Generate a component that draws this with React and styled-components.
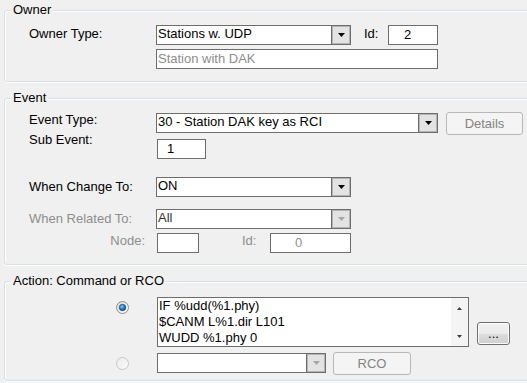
import React from "react";
import styled, { createGlobalStyle } from "styled-components";

const Global = createGlobalStyle`
  html, body { margin: 0; padding: 0; background: #f0f0f0; overflow: hidden; }
  body { font-family: "Liberation Sans", Arial, sans-serif; font-size: 13px; color: #000; }
  #root { width: 527px; height: 383px; overflow: hidden; }
  * { box-sizing: border-box; }
`;

const Page = styled.div`
  display: flex;
  flex-direction: column;
  gap: 16px;
  padding: 10px 0 0 4px;
  width: 600px;
`;

const Group = styled.section`
  position: relative;
  width: 570px;
  border: 1px solid #d5dfe5;
  border-radius: 3px;
  box-shadow: inset 1px 1px 0 #fff, 0 1px 0 #fff;
  padding: ${(p) => p.$pad};
  display: flex;
  flex-direction: column;
`;

const Legend = styled.span`
  position: absolute;
  top: -9px;
  left: 6px;
  padding: 0 2px;
  line-height: 15px;
  background: #f0f0f0;
`;

const Row = styled.div`
  display: flex;
  align-items: flex-start;
  margin-top: ${(p) => p.$mt || 0}px;
`;

const Label = styled.div`
  width: ${(p) => p.$w || 127}px;
  flex: none;
  line-height: 15px;
  white-space: nowrap;
  margin-top: ${(p) => p.$dy || 0}px;
  margin-left: ${(p) => p.$ml || 0}px;
  padding-right: ${(p) => p.$pr || 0}px;
  text-align: ${(p) => p.$align || "left"};
  color: ${(p) => (p.$disabled ? "#8d8d8d" : "#000")};
`;

const TextBox = styled.div`
  flex: none;
  width: ${(p) => p.$w}px;
  height: 20px;
  margin-left: ${(p) => p.$ml || 0}px;
  border: 1px solid #6d6d6d;
  background: #fff;
  line-height: 15px;
  padding: 1px 1px 0 ${(p) => p.$pl || 1}px;
  white-space: nowrap;
  overflow: hidden;
  color: ${(p) => (p.$disabled ? "#8d8d8d" : "#000")};
`;

const ComboBox = styled.div`
  flex: none;
  display: flex;
  width: ${(p) => p.$w}px;
  height: 20px;
  margin-top: ${(p) => p.$mt || 0}px;
  margin-left: ${(p) => p.$ml || 0}px;
  border: 1px solid #6d6d6d;
  background: #fff;
`;

const ComboText = styled.div`
  flex: 1;
  line-height: 15px;
  padding: 0 1px;
  white-space: nowrap;
  overflow: hidden;
  color: ${(p) => (p.$disabled ? "#333" : "#000")};
`;

const ComboButton = styled.div`
  flex: none;
  width: 19px;
  border-left: 1px solid #6d6d6d;
  background: #e3e3e3;
  box-shadow: inset 0 0 0 1px #b4b4b4;
  display: flex;
  align-items: center;
  justify-content: center;
`;

const Button = styled.div`
  flex: none;
  width: ${(p) => p.$w}px;
  height: 23px;
  margin-top: ${(p) => p.$mt || 0}px;
  margin-left: ${(p) => p.$ml || 0}px;
  border: 1px solid ${(p) => (p.$disabled ? "#b5b9bc" : "#707070")};
  border-radius: 3px;
  background: ${(p) =>
    p.$disabled
      ? "#f4f4f4"
      : "linear-gradient(#f2f2f2 0%, #ebebeb 50%, #dddddd 51%, #cfcfcf 100%)"};
  box-shadow: inset 0 0 0 1px ${(p) => (p.$disabled ? "#f4f4f4" : "#fcfcfc")};
  color: ${(p) => (p.$disabled ? "#838383" : "#000")};
  display: flex;
  align-items: center;
  justify-content: center;
  line-height: 15px;
`;

const RadioCell = styled.div`
  flex: none;
  width: 152px;
  padding-left: 111px;
  padding-top: ${(p) => p.$pt}px;
  display: flex;
`;

const Memo = styled.div`
  flex: none;
  display: flex;
  width: 312px;
  height: 50px;
  border: 1px solid #6d6d6d;
  background: #fff;
`;

const MemoText = styled.div`
  flex: 1;
  padding: 0 1px;
  line-height: 16px;
  white-space: pre;
  overflow: hidden;
`;

const ScrollBar = styled.div`
  flex: none;
  width: 17px;
  background: #f4f4f4;
  display: flex;
  flex-direction: column;
  align-items: center;
  justify-content: space-between;
  padding: 9px 0 8px;
`;

const Arrow = ({ color = "#000", up = false, w = 7, h = 4 }) => (
  <svg width={w} height={h} viewBox={`0 0 ${w} ${h}`} style={{ display: "block" }}>
    <polygon
      points={up ? `0,${h} ${w},${h} ${w / 2},0` : `0,0 ${w},0 ${w / 2},${h}`}
      fill={color}
    />
  </svg>
);

const Combo = ({ w, text, disabled, mt, ml }) => (
  <ComboBox $w={w} $mt={mt} $ml={ml}>
    <ComboText $disabled={disabled}>{text}</ComboText>
    <ComboButton>
      <Arrow color={disabled ? "#a6a6a6" : "#000"} />
    </ComboButton>
  </ComboBox>
);

const Radio = ({ checked }) => (
  <svg width="13" height="13" viewBox="0 0 13 13" style={{ display: "block" }}>
    <defs>
      <linearGradient id={checked ? "rg1" : "rg2"} x1="0" y1="0" x2="1" y2="1">
        <stop offset="0" stopColor={checked ? "#d8d8d8" : "#ececec"} />
        <stop offset="1" stopColor={checked ? "#ffffff" : "#fafafa"} />
      </linearGradient>
      <radialGradient id="dot" cx="0.4" cy="0.35" r="0.7">
        <stop offset="0" stopColor="#8fd0ff" />
        <stop offset="0.5" stopColor="#2b7bd0" />
        <stop offset="1" stopColor="#0f3f78" />
      </radialGradient>
    </defs>
    <circle
      cx="6.5"
      cy="6.5"
      r="6"
      fill={`url(#${checked ? "rg1" : "rg2"})`}
      stroke={checked ? "#8f8f8f" : "#c6c6c6"}
    />
    {checked && <circle cx="6.5" cy="6.5" r="3.2" fill="url(#dot)" stroke="#274f7f" strokeWidth="0.8" />}
  </svg>
);

export default function App() {
  return (
    <>
      <Global />
      <Page>
        <Group $pad="14px 0 12px 24px">
          <Legend>Owner</Legend>
          <Row>
            <Label $dy={0.5}>Owner Type:</Label>
            <Combo w={195} text="Stations w. UDP" />
            <Label $w={24} $ml={13} $dy={0.5}>Id:</Label>
            <TextBox $w={50} $pl={15}>2</TextBox>
          </Row>
          <Row $mt={4}>
            <Label />
            <TextBox $w={282} $disabled>Station with DAK</TextBox>
          </Row>
        </Group>

        <Group $pad="13px 0 11px 24px">
          <Legend>Event</Legend>
          <Row>
            <Label $dy={0}>Event Type:</Label>
            <Combo w={282} mt={1} text="30 - Station DAK key as RCI" />
            <Button $w={77} $ml={8} $disabled>Details</Button>
          </Row>
          <Row $mt={4}>
            <Label $dy={-7}>Sub Event:</Label>
            <TextBox $w={49} $ml={1} $pl={9}>1</TextBox>
          </Row>
          <Row $mt={18}>
            <Label $dy={1.5}>When Change To:</Label>
            <Combo w={195} text="ON" />
          </Row>
          <Row $mt={12}>
            <Label $dy={1.5} $disabled>When Related To:</Label>
            <Combo w={195} text="All" disabled />
          </Row>
          <Row $mt={4}>
            <Label $dy={0} $align="right" $pr={11} $disabled>Node:</Label>
            <TextBox $w={42} $ml={1} />
            <Label $w={28} $ml={43} $dy={0} $disabled>Id:</Label>
            <TextBox $w={81} $pl={24} $disabled>0</TextBox>
          </Row>
        </Group>

        <Group $pad="15px 0 5px 0">
          <Legend>Action: Command or RCO</Legend>
          <Row>
            <RadioCell $pt={4}>
              <Radio checked />
            </RadioCell>
            <Memo>
              <MemoText>{"IF %udd(%1.phy)\n$CANM L%1.dir L101\nWUDD %1.phy 0"}</MemoText>
              <ScrollBar>
                <Arrow up w={5} h={3} color="#3c3c3c" />
                <Arrow w={5} h={3} color="#3c3c3c" />
              </ScrollBar>
            </Memo>
            <Button $w={33} $ml={8} $mt={25}>...</Button>
          </Row>
          <Row $mt={5}>
            <RadioCell $pt={5}>
              <Radio />
            </RadioCell>
            <Combo w={169} mt={1} text="" disabled />
            <Button $w={78} $ml={7} $disabled>RCO</Button>
          </Row>
        </Group>
      </Page>
    </>
  );
}
